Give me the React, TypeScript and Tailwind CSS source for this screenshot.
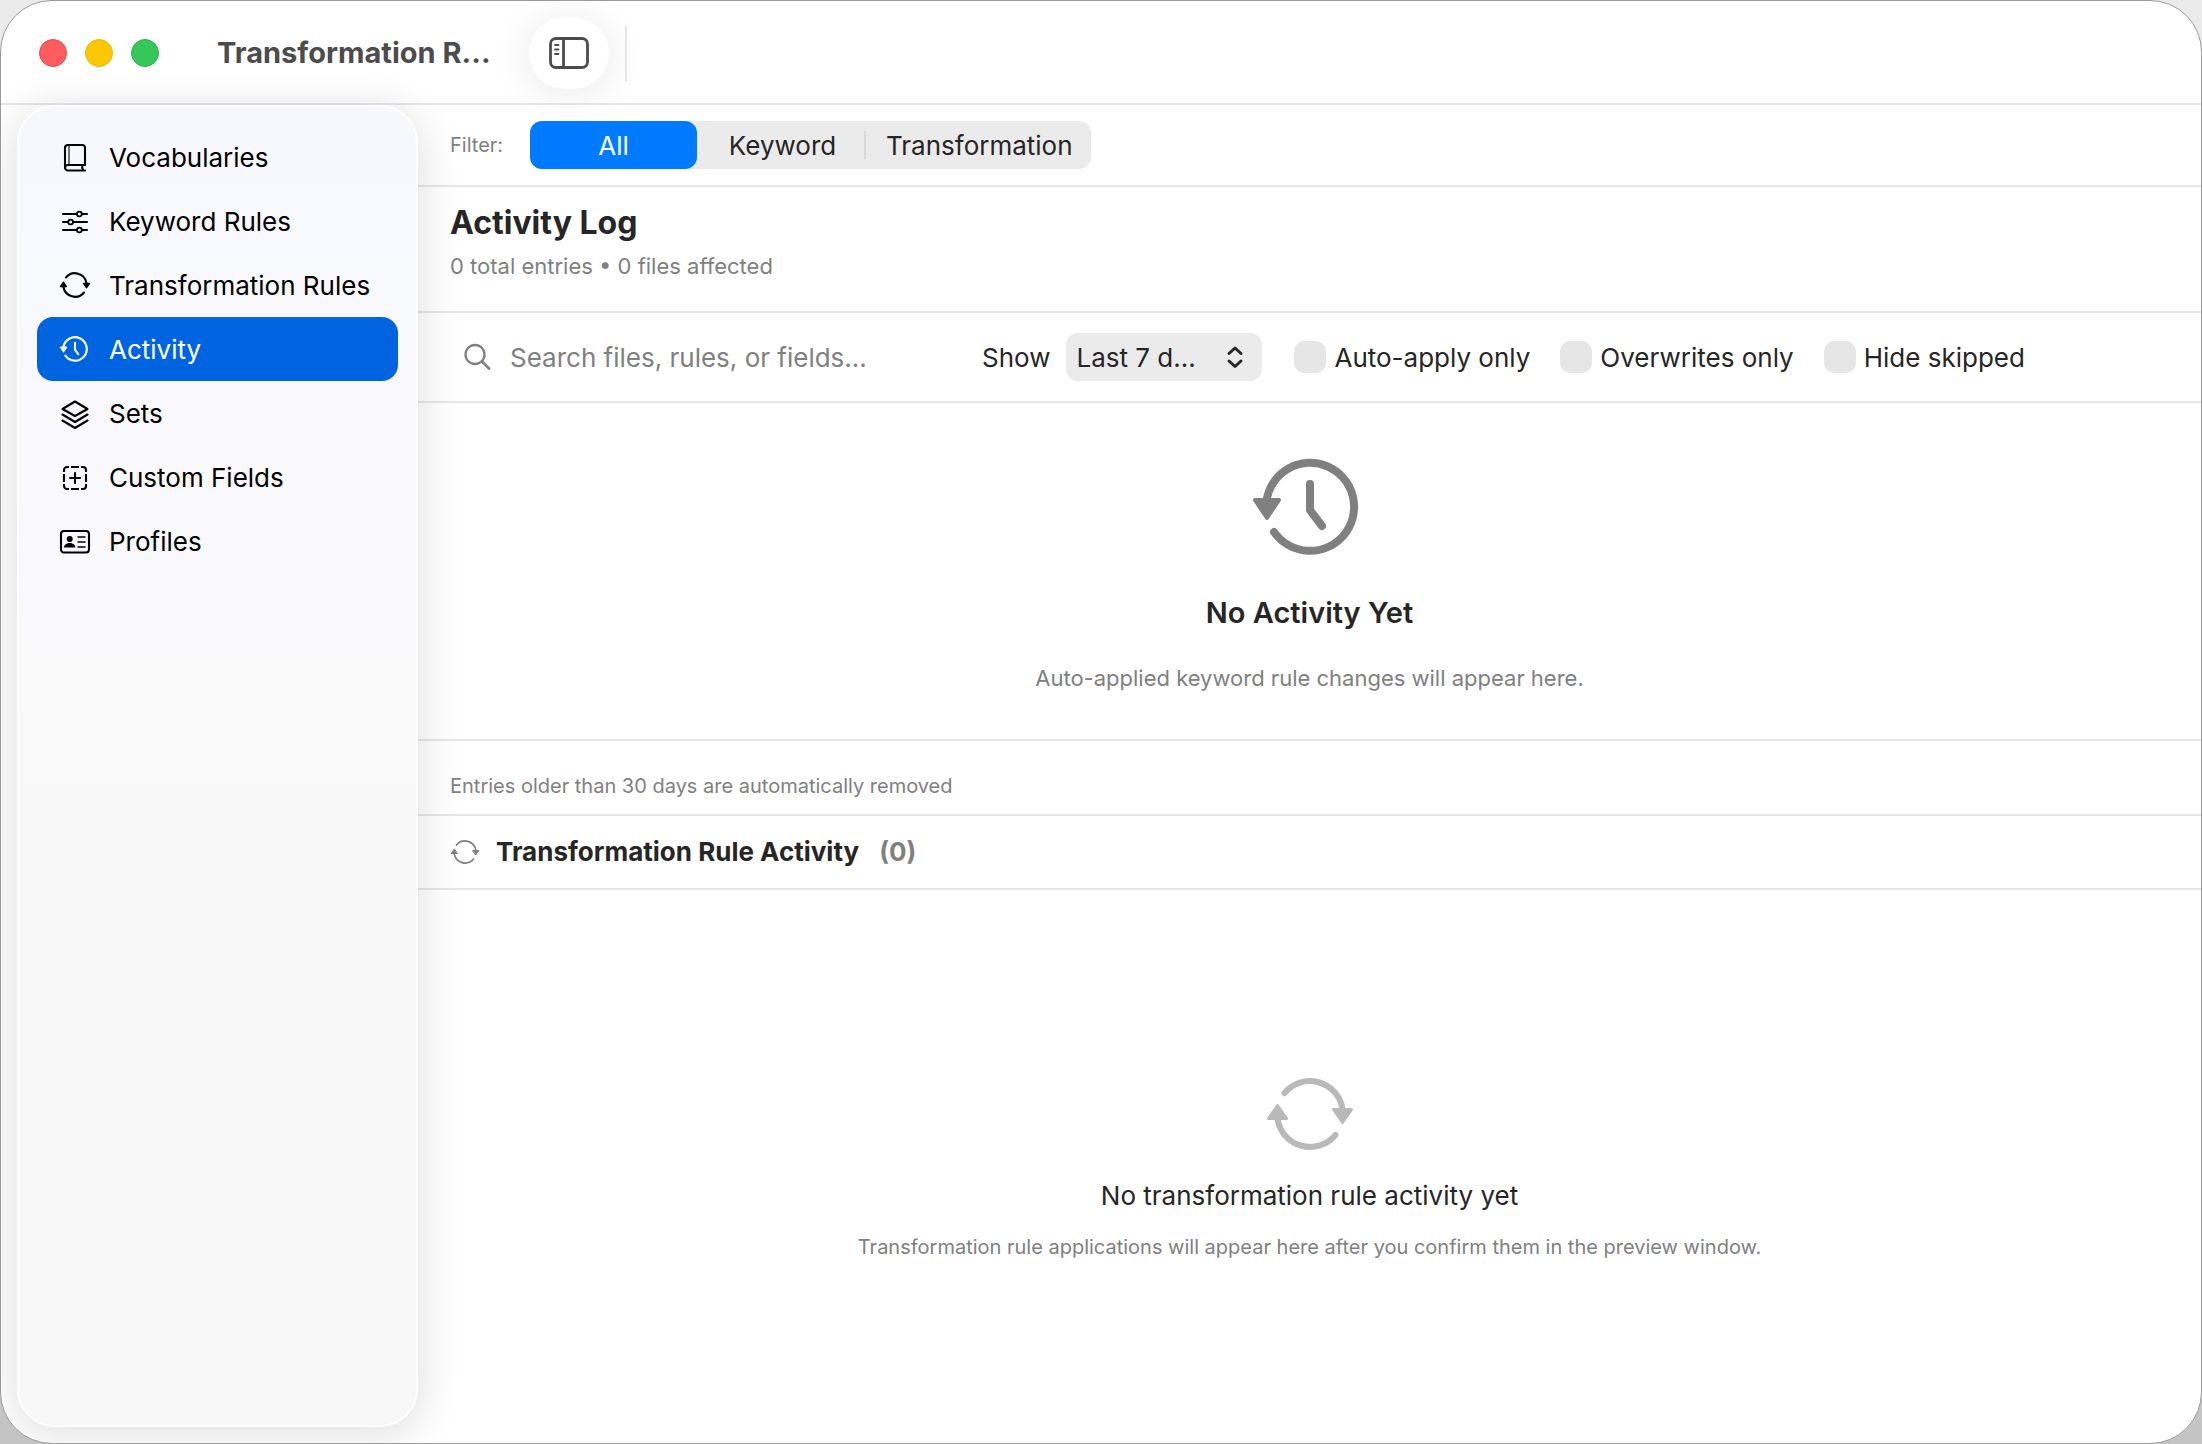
import { useState } from "react";
import type { ReactNode } from "react";

interface IconProps {
  className?: string;
  strokeWidth?: number;
}

function CycleIcon({ className, strokeWidth = 6 }: IconProps) {
  return (
    <svg viewBox="-45 -45 90 90" className={className} fill="none" stroke="currentColor" strokeLinecap="round" strokeLinejoin="round" aria-hidden="true">
      <path strokeWidth={strokeWidth} d="M-25.5 -21A33 33 0 0 1 32.5 -5" />
      <path strokeWidth={strokeWidth} d="M25.5 21A33 33 0 0 1 -32.5 5" />
      <path strokeWidth={3} fill="currentColor" d="M23.5 -4.5H41.5L32.5 8.5Z" />
      <path strokeWidth={3} fill="currentColor" d="M-23.5 4.5H-41.5L-32.5 -8.5Z" />
    </svg>
  );
}

function HistoryIcon({ className, strokeWidth = 8 }: IconProps) {
  return (
    <svg viewBox="-60 -60 120 120" className={className} fill="none" stroke="currentColor" strokeLinecap="round" strokeLinejoin="round" aria-hidden="true">
      <path strokeWidth={strokeWidth} d="M-36 25A44 44 0 1 0 -43.5 -6" />
      <path strokeWidth={strokeWidth} d="M0 -23V3L12 19" />
      <path strokeWidth={4} fill="currentColor" d="M-55 -7H-31L-43 11Z" />
    </svg>
  );
}

function LineIcon({ children }: { children: ReactNode }) {
  return (
    <svg viewBox="0 0 32 32" className="size-8 shrink-0" fill="none" stroke="currentColor" strokeWidth={2.1} strokeLinecap="round" strokeLinejoin="round" aria-hidden="true">
      {children}
    </svg>
  );
}

const items = [
  {
    label: "Vocabularies",
    icon: (
      <LineIcon>
        <path d="M26 24V6.5A2.5 2.5 0 0 0 23.5 4H9A3 3 0 0 0 6 7V26.5A3 3 0 0 0 9 29.5H26" />
        <path d="M6 26.5A3 3 0 0 1 9 24H26M23.5 24.5Q22.5 27 24 29" />
        <path strokeWidth={1.1} d="M10 4.5V23.5" />
      </LineIcon>
    ),
  },
  {
    label: "Keyword Rules",
    icon: (
      <LineIcon>
        <path d="M4 9H17.7M23 9H28M4 17H9M14.2 17H28M4 25H17.7M23 25H28" />
        <g strokeWidth={1.8}>
          <circle cx="20.4" cy="9" r="2.4" />
          <circle cx="11.6" cy="17" r="2.4" />
          <circle cx="20.4" cy="25" r="2.4" />
        </g>
      </LineIcon>
    ),
  },
  { label: "Transformation Rules", icon: <CycleIcon className="size-8 shrink-0" /> },
  { label: "Activity", icon: <HistoryIcon className="size-8 shrink-0" /> },
  {
    label: "Sets",
    icon: (
      <LineIcon>
        <path d="M16 4.5L28.5 12L16 19L3.5 12Z" />
        <path d="M3.5 17.5L16 25L28.5 17.5M3.5 23.5L16 31L28.5 23.5" />
      </LineIcon>
    ),
  },
  {
    label: "Custom Fields",
    icon: (
      <LineIcon>
        <g strokeLinecap="butt">
          <path d="M10 6H8A3 3 0 0 0 5 9V11M22 6H24A3 3 0 0 1 27 9V11M10 28H8A3 3 0 0 1 5 25V23M22 28H24A3 3 0 0 0 27 25V23" />
          <path d="M12 6H20M12 28H20M5 13V21M27 13V21" />
        </g>
        <path d="M11 17H21M16 12V22" />
      </LineIcon>
    ),
  },
  {
    label: "Profiles",
    icon: (
      <LineIcon>
        <rect x="2" y="6" width="28" height="21.5" rx="3" />
        <circle cx="10.7" cy="14" r="3" fill="currentColor" stroke="none" />
        <path fill="currentColor" stroke="none" d="M5 22.5C5 19.5 8 18 10.7 18S16.4 19.5 16.4 22.5Z" />
        <path strokeWidth={1.5} d="M19 12H26M19 17H26M19 22H26" />
      </LineIcon>
    ),
  },
];

const filters = ["All", "Keyword", "Transformation"];
const toggles = ["Auto-apply only", "Overwrites only", "Hide skipped"];

function TitleBar() {
  return (
    <header className="flex h-[104px] shrink-0 items-center border-b-2 border-[#e6e6e6] pt-0.5 pl-[38px]">
      <div className="flex gap-[18px]">
        <button aria-label="Close" className="size-7 rounded-full border border-[#e8484d] bg-[#ff5c60]" />
        <button aria-label="Minimize" className="size-7 rounded-full border border-[#e8b800] bg-[#fac800]" />
        <button aria-label="Zoom" className="size-7 rounded-full border border-[#2db14c] bg-[#35c759]" />
      </div>
      <h1 className="ml-[58px] w-[312px] text-[29px] font-bold whitespace-nowrap text-[#4c4c4c]">Transformation R...</h1>
      <button aria-label="Toggle sidebar" className="flex h-[72px] w-20 items-center justify-center rounded-full bg-white text-[#4c4c4c] shadow-[0_4px_40px_rgba(0,0,0,0.09)]">
        <svg viewBox="0 0 40 32" className="h-8 w-10" fill="none" stroke="currentColor" strokeWidth={2.8} strokeLinecap="round" aria-hidden="true">
          <rect x="1.5" y="1.5" width="37" height="29" rx="5.5" />
          <path d="M14.5 2V30" />
          <path strokeWidth={1.8} d="M6 8H9.5M6 12.5H9.5M6 17H9.5" />
        </svg>
      </button>
      <div className="ml-4 h-14 w-0.5 bg-[#e6e6e6]" />
    </header>
  );
}

function Sidebar({ active, onSelect }: { active: string; onSelect: (label: string) => void }) {
  return (
    <aside className="relative z-10 mb-4 ml-4 w-[401px] shrink-0 rounded-[38px] border-2 border-white bg-linear-to-b from-[#f7f8fe] via-[#f9f9fb] via-35% to-[#f8f8f8] to-60% px-[18px] pt-[18px] shadow-[0_6px_44px_rgba(0,0,0,0.14)]">
      <nav className="flex flex-col">
        {items.map((item) => (
          <button
            key={item.label}
            onClick={() => onSelect(item.label)}
            className={
              item.label === active
                ? "flex h-16 items-center gap-[18px] rounded-2xl bg-[#0064e1] pl-[22px] text-[26px] text-white"
                : "flex h-16 items-center gap-[18px] rounded-2xl pl-[22px] text-[26px] text-black"
            }
          >
            {item.icon}
            {item.label}
          </button>
        ))}
      </nav>
    </aside>
  );
}

function FilterBar() {
  const [filter, setFilter] = useState("All");

  return (
    <div className="flex items-center border-b-2 border-[#e6e6e6] px-8 py-4">
      <span className="w-20 text-[20px] text-[#808080]">Filter:</span>
      <div role="group" aria-label="Filter" className="flex h-12 items-center rounded-xl bg-[#ebebeb]">
        {filters.map((name) => (
          <button
            key={name}
            aria-pressed={name === filter}
            onClick={() => setFilter(name)}
            className={
              name === filter
                ? "h-full w-[167px] rounded-xl bg-[#007aff] text-[26px] text-white"
                : "h-7 min-w-[167px] border-l-2 border-[#d8d8d8] pr-[18px] pl-5 text-[26px] leading-[30px] text-[#262626] nth-2:border-transparent"
            }
          >
            {name}
          </button>
        ))}
      </div>
    </div>
  );
}

function SearchBar() {
  return (
    <div className="flex items-center border-b-2 border-[#e6e6e6] px-8 py-5 text-[26px] text-[#262626]">
      <label className="flex w-[532px] items-center gap-4 pl-3">
        <svg viewBox="0 0 32 32" className="size-8 shrink-0 text-[#808080]" fill="none" stroke="currentColor" strokeWidth={2.3} strokeLinecap="round" aria-hidden="true">
          <circle cx="13" cy="13.5" r="9.5" />
          <path strokeWidth={2.8} d="M20 20.5L27 27.5" />
        </svg>
        <input type="text" aria-label="Search" placeholder="Search files, rules, or fields..." className="w-full bg-transparent outline-none placeholder:text-[#808080]" />
      </label>
      <label htmlFor="range" className="mr-4">Show</label>
      <div className="relative mr-8">
        <select id="range" className="h-12 w-[196px] appearance-none rounded-xl bg-[#ebebeb] pl-2.5">
          <option>Last 7 d...</option>
        </select>
        <svg viewBox="0 0 20 28" className="pointer-events-none absolute top-2.5 right-[17px] h-7 w-5" fill="none" stroke="currentColor" strokeWidth={3} strokeLinecap="round" strokeLinejoin="round" aria-hidden="true">
          <path d="M4 10.5L10 5L16 10.5M4 18L10 23.5L16 18" />
        </svg>
      </div>
      <div className="flex gap-[30px]">
        {toggles.map((name) => (
          <label key={name} className="flex items-center gap-2 whitespace-nowrap">
            <input type="checkbox" className="size-8 appearance-none rounded-[10px] bg-[#e6e6e6] checked:bg-[#007aff]" />
            {name}
          </label>
        ))}
      </div>
    </div>
  );
}

export default function App() {
  const [active, setActive] = useState("Activity");

  return (
    <div className="h-screen bg-linear-to-b from-[#ebebeb] to-[#c4c4c4] font-[Inter,sans-serif]">
      <div className="flex h-full flex-col overflow-hidden rounded-[52px] border border-[#9a9a9a] bg-white">
        <TitleBar />
        <div className="flex min-h-0 flex-1">
          <Sidebar active={active} onSelect={setActive} />
          <main className="flex min-w-0 flex-1 flex-col">
            <FilterBar />

            <div className="border-b-2 border-[#e6e6e6] px-8 pt-3.5 pb-[30px]">
              <h2 className="text-[32px] leading-[44px] font-bold text-[#262626]">Activity Log</h2>
              <p className="mt-1.5 text-[22px] leading-[30px] text-[#808080]">0 total entries • 0 files affected</p>
            </div>

            <SearchBar />

            <section className="flex flex-col items-center border-b-2 border-[#e6e6e6] pt-11 pb-[46px]">
              <HistoryIcon className="size-[120px] text-[#808080]" />
              <h3 className="mt-[26px] text-[29px] leading-[40px] font-semibold text-[#262626]">No Activity Yet</h3>
              <p className="mt-[30px] text-[22px] leading-[30px] text-[#808080]">Auto-applied keyword rule changes will appear here.</p>
            </section>

            <p className="border-b-2 border-[#e6e6e6] px-8 pt-8 pb-[15px] text-[20px] leading-[26px] text-[#808080]">
              Entries older than 30 days are automatically removed
            </p>

            <div className="flex items-center border-b-2 border-[#e6e6e6] px-8 py-4 text-[26px] leading-[40px] font-bold">
              <CycleIcon className="size-[30px] text-[#808080]" strokeWidth={5} />
              <h3 className="ml-4 text-[#262626]">Transformation Rule Activity</h3>
              <span className="ml-5 text-[#808080]">(0)</span>
            </div>

            <section className="flex flex-1 flex-col items-center justify-center pb-1">
              <CycleIcon className="size-[90px] text-[#b9b9b9]" />
              <h3 className="mt-5 text-[26px] leading-[34px] text-[#262626]">No transformation rule activity yet</h3>
              <p className="mt-5 text-[20px] leading-[28px] text-[#808080]">
                Transformation rule applications will appear here after you confirm them in the preview window.
              </p>
            </section>
          </main>
        </div>
      </div>
    </div>
  );
}
